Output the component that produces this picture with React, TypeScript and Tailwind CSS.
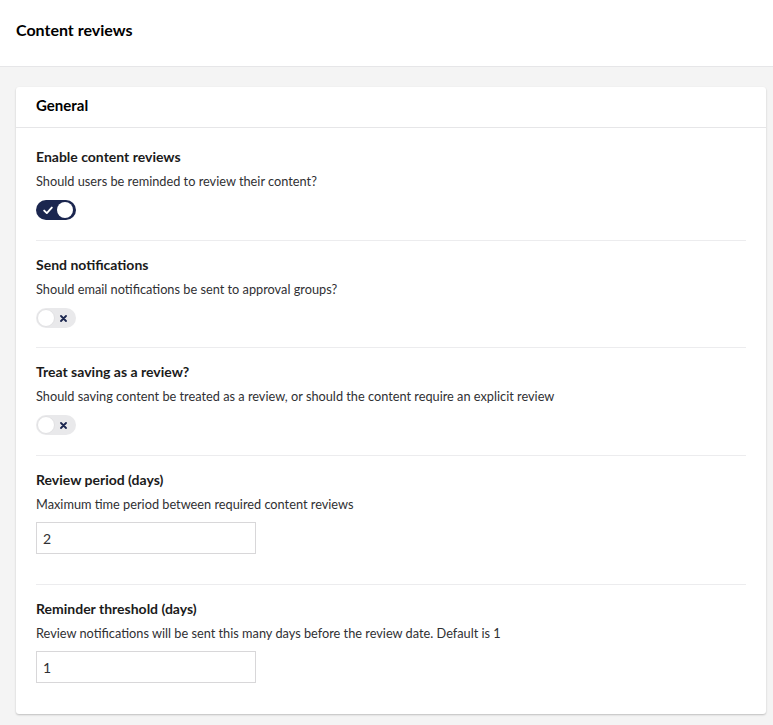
import React from "react";

function Toggle({ on }: { on: boolean }) {
  if (on) {
    return (
      <div className="relative w-[40px] h-[20px] rounded-full bg-[#1b264f]">
        <svg className="absolute left-[7px] top-[6px]" width="10" height="9" viewBox="0 0 10 9">
          <path d="M1.2 4.6 L3.8 7.1 L8.8 1.6" fill="none" stroke="#ffffff" strokeWidth="1.9" strokeLinecap="round" strokeLinejoin="round" />
        </svg>
        <div className="absolute right-[3px] top-[2px] w-[16px] h-[16px] rounded-full bg-white" />
      </div>
    );
  }
  return (
    <div className="relative w-[40px] h-[20px] rounded-full bg-[#e9e9eb]">
      <div className="absolute left-[1px] top-[1px] w-[18px] h-[18px] rounded-full bg-white border border-[#e1e1e3]" />
      <svg className="absolute left-[24px] top-[6.5px]" width="7" height="7" viewBox="0 0 7 7">
        <path d="M1 1 L6 6 M6 1 L1 6" stroke="#1b264f" strokeWidth="1.8" strokeLinecap="round" />
      </svg>
    </div>
  );
}

function Item({
  label,
  desc,
  children,
  first,
  last,
  pb,
  gap = "mt-[9px]",
}: {
  label: string;
  desc: string;
  children: React.ReactNode;
  first?: boolean;
  last?: boolean;
  pb: string;
  gap?: string;
}) {
  return (
    <div className={`${first ? "pt-[19px]" : "pt-[14px]"} ${pb} ${last ? "" : "border-b border-[#ececee]"}`}>
      <div className="text-[14px] leading-[20px] font-bold text-[#1b1b1b]">{label}</div>
      <div className="mt-[4px] text-[12.75px] leading-[20px] text-[#303033]">{desc}</div>
      <div className={gap}>{children}</div>
    </div>
  );
}

function NumInput({ value }: { value: string }) {
  return (
    <div className="w-[220px] h-[32px] border border-[#d8d7d9] bg-white flex items-center px-[6px] text-[14px] text-[#303033]">
      {value}
    </div>
  );
}

export default function App() {
  return (
    <div className="min-h-[725px] bg-[#f4f4f4]" style={{ fontFamily: "Lato, 'Open Sans', sans-serif" }}>
      <div className="h-[67px] bg-white border-b border-[#e6e6e8] pl-[16px] pt-[20px]">
        <div className="text-[16px] leading-[20px] font-bold text-[#000000]">Content reviews</div>
      </div>
      <div className="pl-[16px] pr-[7px] pt-[20px] pb-[11px]">
        <div className="bg-white rounded-[3px] shadow-[0_1px_2px_rgba(0,0,0,0.22)]">
          <div className="h-[41px] border-b border-[#e6e6e8] px-[20px] pt-[8px]">
            <div className="text-[15px] leading-[20px] font-bold text-[#000000]">General</div>
          </div>
          <div className="px-[20px]">
            <Item first label="Enable content reviews" desc="Should users be reminded to review their content?" pb="pb-[20px]">
              <Toggle on />
            </Item>
            <Item label="Send notifications" desc="Should email notifications be sent to approval groups?" pb="pb-[19px]">
              <Toggle on={false} />
            </Item>
            <Item
              label="Treat saving as a review?"
              desc="Should saving content be treated as a review, or should the content require an explicit review"
              pb="pb-[20px]"
            >
              <Toggle on={false} />
            </Item>
            <Item label="Review period (days)" desc="Maximum time period between required content reviews" pb="pb-[30px]" gap="mt-[8px]">
              <NumInput value="2" />
            </Item>
            <Item
              last
              label="Reminder threshold (days)"
              desc="Review notifications will be sent this many days before the review date. Default is 1"
              pb="pb-[31px]"
              gap="mt-[8px]"
            >
              <NumInput value="1" />
            </Item>
          </div>
        </div>
      </div>
    </div>
  );
}
